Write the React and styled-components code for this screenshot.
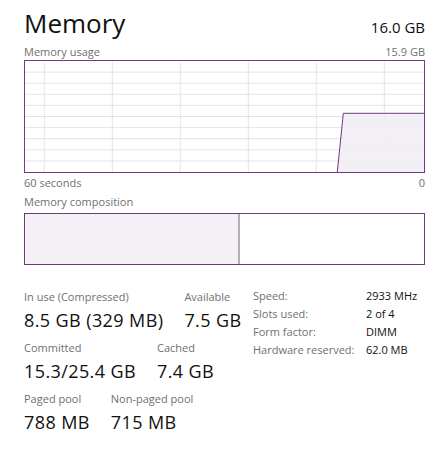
import React from 'react';
import styled, { createGlobalStyle } from 'styled-components';

const GlobalStyle = createGlobalStyle`
  html, body {
    margin: 0;
    padding: 0;
    background: #ffffff;
  }
  body {
    font-family: "Open Sans", "Noto Sans", "Liberation Sans", sans-serif;
    color: #000;
  }
`;

const Page = styled.div`
  width: 442px;
  height: 468px;
  box-sizing: border-box;
  padding: 3px 17px 0 24px;
  background: #fff;
`;

const Header = styled.div`
  display: flex;
  justify-content: space-between;
  align-items: baseline;
  height: 41px;
`;

const Title = styled.h1`
  margin: 0;
  font-size: 26px;
  font-weight: 400;
  line-height: 40px;
  color: #111;
`;

const Total = styled.span`
  font-size: 15px;
  color: #111;
`;

const CaptionRow = styled.div`
  display: flex;
  justify-content: space-between;
  font-size: 11px;
  line-height: 16px;
  color: #707070;
  margin-top: ${p => p.$top || 0}px;
`;

const Chart = styled.div`
  box-sizing: border-box;
  height: 113px;
  border: 1px solid #74388a;
  background: #fff;
  svg {
    display: block;
    width: 100%;
    height: 100%;
  }
`;

const Composition = styled.div`
  box-sizing: border-box;
  display: flex;
  height: 52px;
  margin-top: 3px;
  border: 1px solid #6d3a7d;
`;

const Segment = styled.div`
  flex: 0 0 ${p => p.$width};
  background: ${p => p.$fill};
  border-right: ${p => (p.$divider ? '2px solid #b5adb8' : 'none')};
`;

const Stats = styled.div`
  display: flex;
  margin-top: 24px;
`;

const LeftStats = styled.div`
  display: flex;
  flex-direction: column;
  width: 229px;
`;

const StatRow = styled.div`
  display: flex;
  gap: 21px;
  height: 51px;
`;

const Stat = styled.div`
  display: flex;
  flex-direction: column;
`;

const Label = styled.span`
  font-size: 11px;
  line-height: 16px;
  color: #707070;
  white-space: nowrap;
`;

const Value = styled.span`
  margin-top: 2px;
  font-size: 18px;
  line-height: 26px;
  letter-spacing: 0.4px;
  color: #111;
  white-space: nowrap;
`;

const Specs = styled.div`
  display: grid;
  grid-template-columns: 113px auto;
  grid-auto-rows: 18px;
  align-content: start;
  margin-top: -2px;
  font-size: 11px;
  line-height: 18px;
`;

const SpecName = styled.span`
  color: #707070;
`;

const SpecValue = styled.span`
  color: #111;
`;

const vLines = [19.3, 87.3, 155.3, 223.3, 291.3, 359.3];
const hLines = [1, 2, 3, 4, 5, 6, 7, 8, 9].map(k => k * 11.1);

const UsageGraph = () => (
  <svg viewBox="0 0 399 111" preserveAspectRatio="none">
    {hLines.map(y => (
      <line key={'h' + y} x1="0" x2="399" y1={y} y2={y} stroke="#e9e0ec" strokeWidth="1" />
    ))}
    {vLines.map(x => (
      <line key={'v' + x} x1={x} x2={x} y1="0" y2="111" stroke="#e9e0ec" strokeWidth="1" />
    ))}
    <polygon points="312.3,111 318.3,52.3 399,52.3 399,111" fill="#f1edf3" fillOpacity="0.85" />
    <polyline points="312.3,111 318.3,52.3 399,52.3" fill="none" stroke="#6d3a7d" strokeWidth="1" />
  </svg>
);

const App = () => {
  return (
    <Page>
      <GlobalStyle />
      <Header>
        <Title>Memory</Title>
        <Total>16.0 GB</Total>
      </Header>
      <CaptionRow $top={0}>
        <span>Memory usage</span>
        <span>15.9 GB</span>
      </CaptionRow>
      <Chart>
        <UsageGraph />
      </Chart>
      <CaptionRow $top={2}>
        <span>60 seconds</span>
        <span>0</span>
      </CaptionRow>
      <CaptionRow $top={3}>
        <span>Memory composition</span>
      </CaptionRow>
      <Composition>
        <Segment $width="53.5%" $fill="#f4f0f6" $divider />
        <Segment $width="auto" $fill="#fff" />
      </Composition>
      <Stats>
        <LeftStats>
          <StatRow>
            <Stat>
              <Label>In use (Compressed)</Label>
              <Value>8.5 GB (329 MB)</Value>
            </Stat>
            <Stat>
              <Label>Available</Label>
              <Value>7.5 GB</Value>
            </Stat>
          </StatRow>
          <StatRow>
            <Stat>
              <Label>Committed</Label>
              <Value>15.3/25.4 GB</Value>
            </Stat>
            <Stat>
              <Label>Cached</Label>
              <Value>7.4 GB</Value>
            </Stat>
          </StatRow>
          <StatRow>
            <Stat>
              <Label>Paged pool</Label>
              <Value>788 MB</Value>
            </Stat>
            <Stat>
              <Label>Non-paged pool</Label>
              <Value>715 MB</Value>
            </Stat>
          </StatRow>
        </LeftStats>
        <Specs>
          <SpecName>Speed:</SpecName>
          <SpecValue>2933 MHz</SpecValue>
          <SpecName>Slots used:</SpecName>
          <SpecValue>2 of 4</SpecValue>
          <SpecName>Form factor:</SpecName>
          <SpecValue>DIMM</SpecValue>
          <SpecName>Hardware reserved:</SpecName>
          <SpecValue>62.0 MB</SpecValue>
        </Specs>
      </Stats>
    </Page>
  );
};

export default App;
